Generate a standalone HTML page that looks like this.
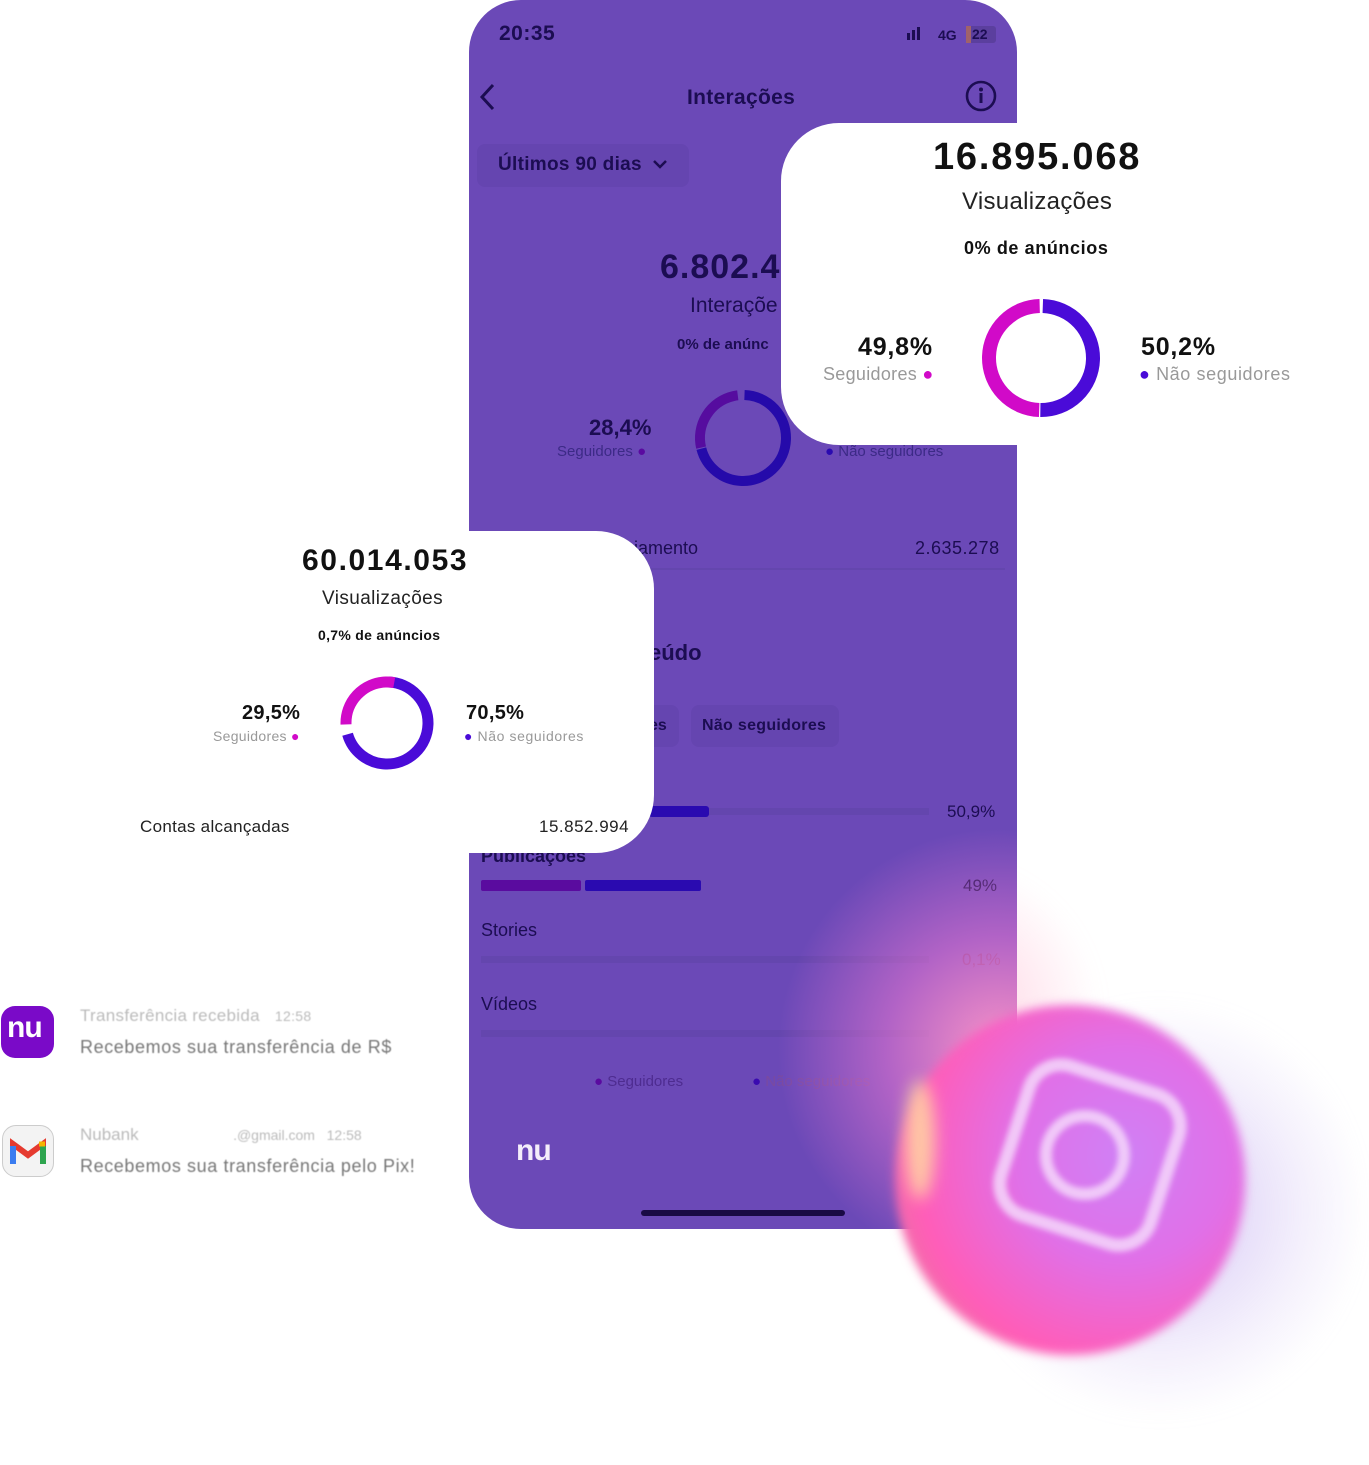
<!DOCTYPE html>
<html><head><meta charset="utf-8"><style>
*{margin:0;padding:0;box-sizing:border-box}
body{width:1369px;height:1465px;background:#fff;position:relative;overflow:hidden;font-family:"Liberation Sans",sans-serif}
.a{position:absolute;white-space:nowrap}
.phone{position:absolute;left:469px;top:0;width:548px;height:1229px;background:#6b49b7;border-radius:52px;overflow:hidden}
.d{color:#1c0d52}
.b{font-weight:bold}
</style></head><body>

<div class="a" style="left:800px;top:860px;width:300px;height:300px;border-radius:50%;background:radial-gradient(circle,rgba(255,170,200,.55),rgba(255,200,220,0) 70%);filter:blur(10px)"></div>
<div class="a" style="left:960px;top:1000px;width:400px;height:420px;border-radius:50%;background:radial-gradient(circle,rgba(170,140,235,.5),rgba(200,180,240,.2) 50%,rgba(255,255,255,0) 72%);filter:blur(10px)"></div>

<div class="phone">
  <div class="a d b" style="left:30px;top:22px;font-size:21px;letter-spacing:.5px">20:35</div>
  <div class="a" style="left:438px;top:33px;width:3px;height:7px;background:#1c0d52"></div>
  <div class="a" style="left:443px;top:30px;width:3px;height:10px;background:#1c0d52"></div>
  <div class="a" style="left:448px;top:27px;width:3px;height:13px;background:#1c0d52"></div>
  <div class="a d b" style="left:469px;top:27px;font-size:14px">4G</div>
  <div class="a" style="left:497px;top:26px;width:30px;height:17px;background:#5b3f9e;border-radius:3px"></div>
  <div class="a" style="left:497px;top:26px;width:5px;height:17px;background:#a0626a"></div>
  <div class="a d b" style="left:503px;top:26px;font-size:14px">22</div>
  <svg class="a" style="left:8px;top:82px" width="20" height="30"><path d="M16 3 L5 15 L16 27" stroke="#1c0d52" stroke-width="3" fill="none"/></svg>
  <div class="a d b" style="left:218px;top:86px;font-size:21px;letter-spacing:.3px">Interações</div>
  <svg class="a" style="left:496px;top:80px" width="32" height="32"><circle cx="16" cy="16" r="14" stroke="#1c0d52" stroke-width="2.6" fill="none"/><circle cx="16" cy="9.5" r="2" fill="#1c0d52"/><rect x="14.5" y="13" width="3" height="10" fill="#1c0d52"/></svg>
  <div class="a" style="left:8px;top:144px;width:212px;height:43px;background:#6545b0;border-radius:8px"></div>
  <div class="a d b" style="left:29px;top:154px;font-size:19px;letter-spacing:.3px">Últimos 90 dias</div>
  <svg class="a" style="left:183px;top:158px" width="16" height="12"><path d="M2 3 L8 9 L14 3" stroke="#1c0d52" stroke-width="2.5" fill="none"/></svg>
  <div class="a d b" style="left:191px;top:248px;font-size:34px;letter-spacing:1px">6.802.4</div>
  <div class="a d" style="left:221px;top:294px;font-size:21px">Interaçõe</div>
  <div class="a d b" style="left:208px;top:336px;font-size:15px">0% de anúnc</div>
  <div class="a d b" style="left:120px;top:415px;font-size:22px">28,4%</div>
  <div class="a" style="left:88px;top:443px;font-size:15px;color:#3c2a86">Seguidores <span style="color:#5a0aa0">●</span></div>
  <svg class="a" style="left:222px;top:386px" width="104" height="104"><circle cx="52" cy="52" r="43" stroke="#250aaa" stroke-width="10" fill="none" stroke-dasharray="190 80" transform="rotate(-88 52 52)"/><circle cx="52" cy="52" r="43" stroke="#560c9f" stroke-width="10" fill="none" stroke-dasharray="72 198" transform="rotate(167 52 52)"/></svg>
  <div class="a" style="left:356px;top:443px;font-size:15px;color:#3c2a86"><span style="color:#2a0ab0">●</span> Não seguidores</div>
  <div class="a d" style="left:165px;top:538px;font-size:18px">iamento</div>
  <div class="a d" style="left:446px;top:538px;font-size:18px;letter-spacing:.5px">2.635.278</div>
  <div class="a" style="left:12px;top:568px;width:524px;height:2px;background:#6446ae"></div>
  <div class="a d b" style="left:180px;top:640px;font-size:22px">eúdo</div>
  <div class="a" style="left:150px;top:705px;width:60px;height:42px;background:#6545b0;border-radius:8px"></div>
  <div class="a d b" style="left:180px;top:717px;font-size:16px">es</div>
  <div class="a" style="left:222px;top:705px;width:148px;height:42px;background:#6545b0;border-radius:8px"></div>
  <div class="a d b" style="left:233px;top:717px;font-size:16px;letter-spacing:.3px">Não seguidores</div>
  <div class="a" style="left:12px;top:808px;width:448px;height:7px;background:#6446ae"></div>
  <div class="a" style="left:180px;top:806px;width:60px;height:11px;background:#2a0ab0;border-radius:3px"></div>
  <div class="a d" style="left:478px;top:802px;font-size:17px">50,9%</div>
  <div class="a d b" style="left:12px;top:846px;font-size:18px">Publicações</div>
  <div class="a" style="left:12px;top:880px;width:100px;height:11px;background:#5a0b9f;border-radius:2px"></div>
  <div class="a" style="left:116px;top:880px;width:116px;height:11px;background:#2a0ab0;border-radius:2px"></div>
  <div class="a d" style="left:494px;top:876px;font-size:17px">49%</div>
  <div class="a d" style="left:12px;top:920px;font-size:18px">Stories</div>
  <div class="a" style="left:12px;top:956px;width:448px;height:7px;background:#6446ae"></div>
  <div class="a" style="left:493px;top:950px;font-size:17px;color:#6a2a80">0,1%</div>
  <div class="a d" style="left:12px;top:994px;font-size:18px">Vídeos</div>
  <div class="a" style="left:12px;top:1030px;width:448px;height:7px;background:#6446ae"></div>
  <div class="a" style="left:125px;top:1073px;font-size:15px;color:#4e2c90"><span style="color:#5a0aa0">●</span> Seguidores</div>
  <div class="a" style="left:283px;top:1073px;font-size:15px;color:#7a4aa0"><span style="color:#3a0ab0">●</span> Não seguidores</div>
  <div class="a b" style="left:47px;top:1134px;font-size:30px;color:#f4eefa;letter-spacing:-1px">nu</div>
  <div class="a" style="left:172px;top:1210px;width:204px;height:6px;background:#1a0a45;border-radius:3px"></div>
  <div class="a" style="left:300px;top:820px;width:460px;height:460px;border-radius:50%;background:radial-gradient(circle,rgba(255,150,200,.95),rgba(235,120,210,.55) 35%,rgba(107,73,183,0) 68%)"></div>
</div>

<div class="a" style="left:895px;top:1005px;width:350px;height:350px;border-radius:50%;background:radial-gradient(circle at 62% 38%,#d080f5 0%,#e070e8 35%,#ff5db8 68%,#e8789a 86%,#c070c0 100%);filter:blur(5px);transform:rotate(20deg)"></div>
<div class="a" style="left:905px;top:1080px;width:30px;height:120px;border-radius:50%;background:#ffe0a0;filter:blur(8px);opacity:.8"></div>
<div class="a" style="left:1005px;top:1070px;width:170px;height:170px;border:13px solid rgba(245,215,250,.85);border-radius:40px;filter:blur(3px);transform:rotate(18deg)"></div>
<div class="a" style="left:1040px;top:1110px;width:90px;height:90px;border:12px solid rgba(245,215,250,.85);border-radius:50%;filter:blur(3px)"></div>

<div class="a" style="left:781px;top:123px;width:600px;height:322px;background:#fff;border-radius:58px 0 0 58px"></div>
<div class="a b" style="left:933px;top:136px;font-size:38px;color:#111;letter-spacing:1.8px">16.895.068</div>
<div class="a" style="left:962px;top:188px;font-size:24px;color:#222;letter-spacing:.3px">Visualizações</div>
<div class="a b" style="left:964px;top:238px;font-size:18px;color:#111;letter-spacing:.6px">0% de anúncios</div>
<div class="a b" style="left:858px;top:333px;font-size:25px;color:#111;letter-spacing:.8px">49,8%</div>
<div class="a" style="left:823px;top:364px;font-size:18px;color:#999;letter-spacing:.3px">Seguidores <span style="color:#d10ac8">●</span></div>
<svg class="a" style="left:981px;top:298px" width="120" height="120"><circle cx="60" cy="60" r="52" stroke="#4a0bd8" stroke-width="14" fill="none" stroke-dasharray="162 165" transform="rotate(-88 60 60)"/><circle cx="60" cy="60" r="52" stroke="#d10ac8" stroke-width="14" fill="none" stroke-dasharray="160 167" transform="rotate(92 60 60)"/></svg>
<div class="a b" style="left:1141px;top:333px;font-size:25px;color:#111;letter-spacing:.8px">50,2%</div>
<div class="a" style="left:1139px;top:364px;font-size:18px;color:#999;letter-spacing:.6px"><span style="color:#4a0bd8">●</span> Não seguidores</div>

<div class="a" style="left:-60px;top:531px;width:714px;height:322px;background:#fff;border-radius:0 58px 58px 0"></div>
<div class="a b" style="left:302px;top:544px;font-size:30px;color:#111;letter-spacing:1.6px">60.014.053</div>
<div class="a" style="left:322px;top:588px;font-size:19px;color:#222;letter-spacing:.4px">Visualizações</div>
<div class="a b" style="left:318px;top:627px;font-size:14px;color:#111;letter-spacing:.3px">0,7% de anúncios</div>
<div class="a b" style="left:242px;top:702px;font-size:20px;color:#111;letter-spacing:.3px">29,5%</div>
<div class="a" style="left:213px;top:728px;font-size:14px;color:#999;letter-spacing:.3px">Seguidores <span style="color:#d10ac8">●</span></div>
<svg class="a" style="left:339px;top:675px" width="96" height="96"><circle cx="48" cy="48" r="41" stroke="#4a0bd8" stroke-width="11" fill="none" stroke-dasharray="180 78" transform="rotate(-88 48 48)"/><circle cx="48" cy="48" r="41" stroke="#d10ac8" stroke-width="11" fill="none" stroke-dasharray="73 185" transform="rotate(178 48 48)"/></svg>
<div class="a b" style="left:466px;top:702px;font-size:20px;color:#111;letter-spacing:.3px">70,5%</div>
<div class="a" style="left:464px;top:728px;font-size:14px;color:#999;letter-spacing:.6px"><span style="color:#4a0bd8">●</span> Não seguidores</div>
<div class="a" style="left:140px;top:817px;font-size:17px;color:#222;letter-spacing:.3px">Contas alcançadas</div>
<div class="a" style="left:539px;top:817px;font-size:17px;color:#222;letter-spacing:.5px">15.852.994</div>

<div class="a" style="left:1px;top:1006px;width:53px;height:52px;background:#7a0ac8;border-radius:14px"></div>
<div class="a b" style="left:7px;top:1011px;font-size:30px;color:#fff;letter-spacing:-1px">nu</div>
<div class="a" style="left:80px;top:1006px;font-size:17px;color:#bbb;filter:blur(.6px);letter-spacing:.3px">Transferência recebida &nbsp; <span style="font-size:14px">12:58</span></div>
<div class="a" style="left:80px;top:1037px;font-size:18px;color:#777;filter:blur(.6px);letter-spacing:.6px">Recebemos sua transferência de R$</div>
<div class="a" style="left:2px;top:1125px;width:52px;height:52px;background:#f3f3f3;border:1px solid #ccc;border-radius:14px"></div>
<svg class="a" style="left:9px;top:1138px" width="38" height="28"><path d="M4 26 V6 L19 17 L34 6 V26" stroke="#e53a2f" stroke-width="6" fill="none"/><path d="M4 8 V26" stroke="#3a7cf0" stroke-width="6"/><path d="M34 8 V26" stroke="#2da44e" stroke-width="6"/><path d="M30 6 L36 6" stroke="#f5b400" stroke-width="5"/></svg>
<div class="a" style="left:80px;top:1125px;font-size:17px;color:#bbb;filter:blur(.6px)">Nubank <span style="display:inline-block;width:85px"></span> <span style="font-size:14px">.@gmail.com &nbsp; 12:58</span></div>
<div class="a" style="left:80px;top:1156px;font-size:18px;color:#777;filter:blur(.6px);letter-spacing:.6px">Recebemos sua transferência pelo Pix!</div>
</body></html>
